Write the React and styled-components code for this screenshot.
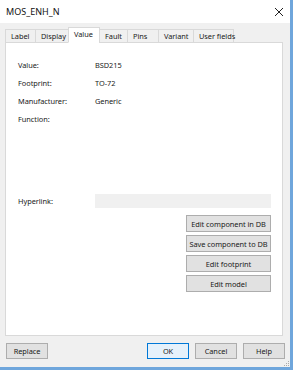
import React from "react";
import styled, { createGlobalStyle } from "styled-components";

const GlobalStyle = createGlobalStyle`
  html, body {
    margin: 0;
    padding: 0;
    background: #ffffff;
  }
  * {
    box-sizing: border-box;
  }
`;

const fields = [
  { label: "Value:", value: "BSD215" },
  { label: "Footprint:", value: "TO-72" },
  { label: "Manufacturer:", value: "Generic" },
  { label: "Function:", value: "" },
];

const tabs = [
  { name: "Label", width: 31 },
  { name: "Display", width: 34 },
  { name: "Value", width: 32 },
  { name: "Fault", width: 29 },
  { name: "Pins", width: 32 },
  { name: "Variant", width: 36 },
  { name: "User fields", width: 41 },
];

const actions = [
  "Edit component in DB",
  "Save component to DB",
  "Edit footprint",
  "Edit model",
];

const App = () => {
  return (
    <>
      <GlobalStyle />
      <Window>
        <TitleBar>
          <Title>MOS_ENH_N</Title>
          <CloseButton>
            <svg width="10" height="10" viewBox="0 0 10 10">
              <path d="M1 1 L9 9 M9 1 L1 9" stroke="#222" strokeWidth="1" />
            </svg>
          </CloseButton>
        </TitleBar>
        <Body>
          <TabRow>
            {tabs.map((tab) => (
              <Tab
                key={tab.name}
                $active={tab.name === "Value"}
                $width={tab.width}
              >
                {tab.name}
              </Tab>
            ))}
          </TabRow>
          <Panel>
            <FieldList>
              {fields.map((field) => (
                <FieldRow key={field.label}>
                  <FieldLabel>{field.label}</FieldLabel>
                  <FieldValue>{field.value}</FieldValue>
                </FieldRow>
              ))}
            </FieldList>
            <HyperlinkRow>
              <FieldLabel>Hyperlink:</FieldLabel>
              <HyperlinkInput />
            </HyperlinkRow>
            <ActionColumn>
              {actions.map((action) => (
                <ActionButton key={action}>{action}</ActionButton>
              ))}
            </ActionColumn>
          </Panel>
          <Footer>
            <DialogButton>Replace</DialogButton>
            <FooterRight>
              <DialogButton $default>OK</DialogButton>
              <DialogButton>Cancel</DialogButton>
              <DialogButton>Help</DialogButton>
            </FooterRight>
          </Footer>
          <SizeGrip>
            <svg width="7" height="7" viewBox="0 0 7 7">
              <rect x="5" y="1" width="1" height="1" fill="#aaa" />
              <rect x="3" y="3" width="1" height="1" fill="#aaa" />
              <rect x="5" y="3" width="1" height="1" fill="#aaa" />
              <rect x="1" y="5" width="1" height="1" fill="#aaa" />
              <rect x="3" y="5" width="1" height="1" fill="#aaa" />
              <rect x="5" y="5" width="1" height="1" fill="#aaa" />
            </svg>
          </SizeGrip>
        </Body>
      </Window>
    </>
  );
};

export default App;

const Window = styled.div`
  width: 293px;
  height: 370px;
  background: #f0f0f0;
  border-right: 3px solid #6fa6dc;
  border-bottom: 3px solid #6fa6dc;
  display: flex;
  flex-direction: column;
  font-family: "Noto Sans", "Open Sans", sans-serif;
  font-size: 7.4px;
  letter-spacing: -0.05px;
  color: #1a1a1a;
`;

const TitleBar = styled.div`
  height: 23px;
  background: #ffffff;
  display: flex;
  align-items: center;
  justify-content: space-between;
  padding: 0 5px 0 6px;
`;

const Title = styled.div`
  font-size: 9px;
  letter-spacing: 0;
  color: #111;
  padding-bottom: 1px;
`;

const CloseButton = styled.div`
  width: 12px;
  height: 12px;
  display: flex;
  align-items: center;
  justify-content: center;
`;

const Body = styled.div`
  position: relative;
  flex: 1;
  display: flex;
  flex-direction: column;
  padding: 4px 0 0 5px;
`;

const TabRow = styled.div`
  display: flex;
  align-items: flex-end;
  height: 16px;
  margin-right: 7px;
  position: relative;
  z-index: 1;
  margin-bottom: -1px;
`;

const Tab = styled.div`
  width: ${({ $width }) => $width}px;
  height: ${({ $active }) => ($active ? 16 : 14)}px;
  margin-left: -1px;
  padding-left: 5px;
  display: flex;
  align-items: center;
  border: 1px solid #d9d9d9;
  border-bottom: ${({ $active }) =>
    $active ? "1px solid #ffffff" : "1px solid #d9d9d9"};
  background: ${({ $active }) => ($active ? "#ffffff" : "#f0f0f0")};
  white-space: nowrap;
  padding-bottom: ${({ $active }) => ($active ? 2 : 0)}px;
  &:first-child {
    margin-left: 0;
  }
`;

const Panel = styled.div`
  height: 294px;
  margin-right: 7px;
  background: #ffffff;
  border: 1px solid #d9d9d9;
  padding: 13px 11px 0 12px;
  display: flex;
  flex-direction: column;
`;

const FieldList = styled.div`
  display: flex;
  flex-direction: column;
`;

const FieldRow = styled.div`
  display: grid;
  grid-template-columns: 77px 1fr;
  align-items: center;
  height: 18px;
`;

const FieldLabel = styled.div`
  white-space: nowrap;
`;

const FieldValue = styled.div`
  white-space: nowrap;
`;

const HyperlinkRow = styled.div`
  display: grid;
  grid-template-columns: 77px 1fr;
  align-items: center;
  height: 14px;
  margin-top: 66px;
`;

const HyperlinkInput = styled.div`
  height: 14px;
  background: #f0f0f0;
`;

const ActionColumn = styled.div`
  display: flex;
  flex-direction: column;
  align-items: flex-end;
  gap: 3px;
  margin-top: 7px;
`;

const ActionButton = styled.div`
  width: 85px;
  height: 17px;
  background: #e1e1e1;
  border: 1px solid #adadad;
  display: flex;
  align-items: center;
  justify-content: center;
  white-space: nowrap;
`;

const Footer = styled.div`
  display: flex;
  justify-content: space-between;
  align-items: center;
  margin-top: 7px;
  padding: 0 5px 0 1px;
`;

const FooterRight = styled.div`
  display: flex;
  gap: 6px;
`;

const DialogButton = styled.div`
  width: 42px;
  height: 16px;
  background: ${({ $default }) => ($default ? "#e5f1fb" : "#e1e1e1")};
  border: 1px solid ${({ $default }) => ($default ? "#0078d7" : "#adadad")};
  display: flex;
  align-items: center;
  justify-content: center;
`;

const SizeGrip = styled.div`
  position: absolute;
  right: 0;
  bottom: 0;
  width: 7px;
  height: 7px;
  display: flex;
`;
